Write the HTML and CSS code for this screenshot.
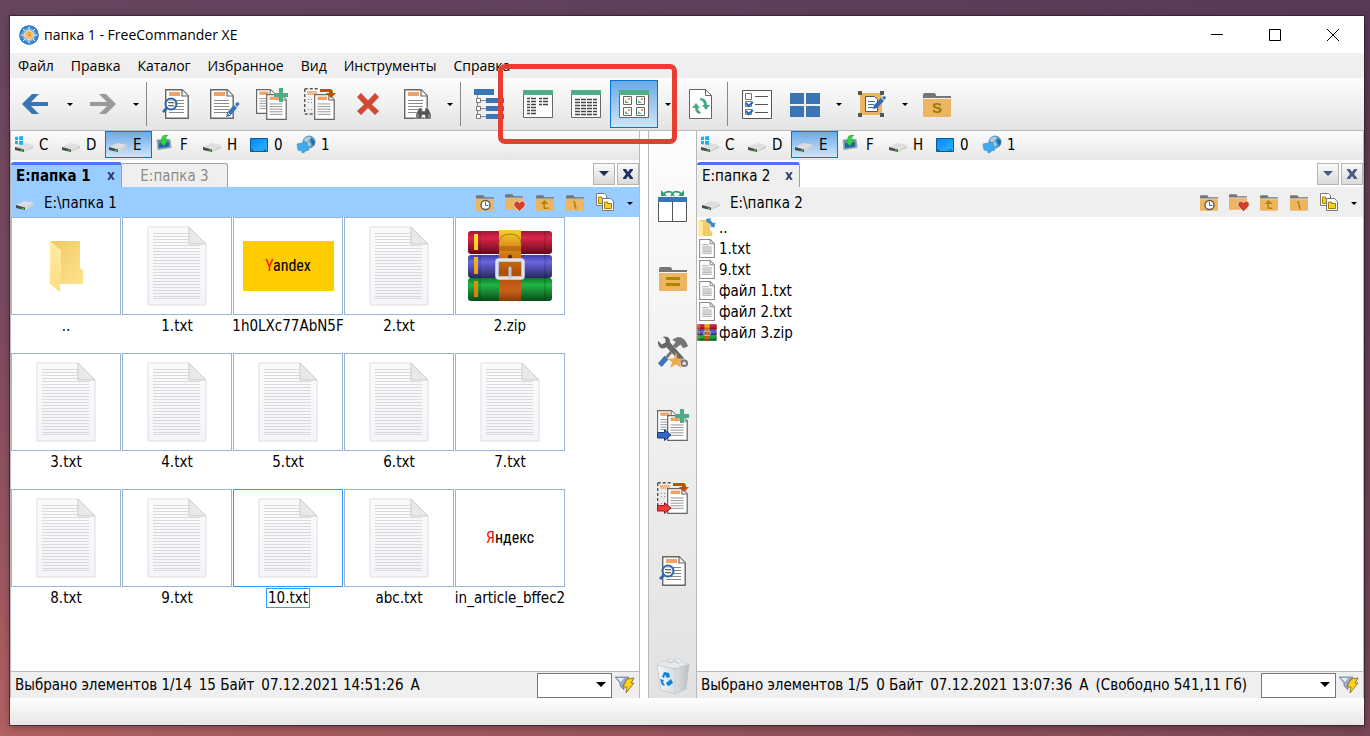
FILE: index.html
```html
<!DOCTYPE html>
<html lang="ru">
<head>
<meta charset="utf-8">
<title>папка 1 - FreeCommander XE</title>
<link rel="stylesheet" href="styles.css">
</head>
<body>
<svg class="defs" aria-hidden="true">
  <defs>
    <linearGradient id="g-disk" x1="0" y1="0" x2="1" y2="1"><stop offset="0" stop-color="#f0f0f0"/><stop offset="1" stop-color="#b4b4b4"/></linearGradient>
    <linearGradient id="g-page" x1="0" y1="0" x2="0" y2="1"><stop offset="0" stop-color="#fbfbfb"/><stop offset="1" stop-color="#f3f5f8"/></linearGradient>
    <linearGradient id="g-fold" x1="0" y1="0" x2="1" y2="1"><stop offset="0" stop-color="#efc95f"/><stop offset="1" stop-color="#ffe391"/></linearGradient>
    <linearGradient id="g-flap" x1="0" y1="0" x2="0" y2="1"><stop offset="0" stop-color="#ffeba8"/><stop offset="1" stop-color="#ffdc80"/></linearGradient>
    <linearGradient id="g-red" x1="0" y1="0" x2="0" y2="1"><stop offset="0" stop-color="#a31635"/><stop offset=".3" stop-color="#d92648"/><stop offset="1" stop-color="#650818"/></linearGradient>
    <linearGradient id="g-blue" x1="0" y1="0" x2="0" y2="1"><stop offset="0" stop-color="#3e3ea2"/><stop offset=".3" stop-color="#6866e0"/><stop offset="1" stop-color="#28285f"/></linearGradient>
    <linearGradient id="g-green" x1="0" y1="0" x2="0" y2="1"><stop offset="0" stop-color="#0d7c2b"/><stop offset=".3" stop-color="#22b644"/><stop offset="1" stop-color="#064b17"/></linearGradient>
    <linearGradient id="g-strap" x1="0" y1="0" x2="0" y2="1"><stop offset="0" stop-color="#f5d22a"/><stop offset=".25" stop-color="#d98a1c"/><stop offset=".6" stop-color="#b04f08"/><stop offset=".85" stop-color="#c8601a"/><stop offset="1" stop-color="#8a3d08"/></linearGradient>
    <linearGradient id="g-gold" x1="0" y1="0" x2="0" y2="1"><stop offset="0" stop-color="#ffe02a"/><stop offset="1" stop-color="#d8780c"/></linearGradient>
    <linearGradient id="g-mon" x1="0" y1="0" x2="1" y2="1"><stop offset="0" stop-color="#0088f0"/><stop offset="1" stop-color="#35b4ff"/></linearGradient>
    <radialGradient id="g-ball"><stop offset="0" stop-color="#e8f3fc"/><stop offset=".55" stop-color="#7fb8ea"/><stop offset="1" stop-color="#1463b8"/></radialGradient>
    <linearGradient id="g-bin" x1="0" y1="0" x2="1" y2="0"><stop offset="0" stop-color="#f4f6f8"/><stop offset=".6" stop-color="#d9dde0"/><stop offset="1" stop-color="#b9bfc4"/></linearGradient>
  </defs>

  <symbol id="i-app" viewBox="0 0 20 20"><circle cx="10" cy="10" r="9.700" fill="url(#g-ball)"/><circle cx="10" cy="10" r="8.800" fill="none" stroke="#2b7fd0" stroke-width="1.600"/><path d="M10 1.500v3M10 15.500v3M1.500 10h3M15.500 10h3M4 4l2 2M14 14l2 2M4 16l2-2M14 6l2-2" stroke="#e6f2fc"/><circle cx="10" cy="10" r="4.500" fill="#f9b860" stroke="#f3dcb4"/><path d="M10 7v3.500h2" stroke="#d08c2c" fill="none"/></symbol>
  <symbol id="i-arrow" viewBox="0 0 32 32"><path d="M2 16 12 6h7l-8 8h17v4H11l8 8h-7z"/></symbol>
  <symbol id="i-page" viewBox="0 0 24 30"><path d="M.7.700h16.500l6 6v22.500H.7z" fill="#fff" stroke="#666" stroke-width="1.400"/><path d="M17 1v6h6" fill="#f5f5f5" stroke="#666" stroke-width="1.200"/><path d="M4 3h11v4H4z" fill="#f0a264"/><path d="M4 11.500h15M4 14.500h15M4 17.500h15M4 20.500h15M4 23.500h15" stroke="#888"/></symbol>
  <symbol id="i-dash" viewBox="0 0 24 30"><path d="M.7.700h15M.7 1v25H11" fill="none" stroke="#555" stroke-width="1.400" stroke-dasharray="3 2"/><path d="M3 3h10v4H3z" fill="#f0a264"/><path d="M4 4h9M3 6h9" stroke="#fff" stroke-dasharray="1 1"/><path d="M4 11.500h6M4 14.500h6M4 21.500h4" stroke="#888" stroke-dasharray="1 2"/></symbol>
  <symbol id="i-view" viewBox="0 0 32 32"><use href="#i-page" x="5" y="1" width="24" height="30"/><circle cx="11" cy="16" r="5.500" fill="#fff" fill-opacity=".6" stroke="#2c67ac" stroke-width="2"/><path d="M8 14.500h6M8 17.500h6" stroke="#666"/><path d="m7 20-4 4" stroke="#2c67ac" stroke-width="2.600"/></symbol>
  <symbol id="i-edit" viewBox="0 0 32 32"><use href="#i-page" x="2" y="1" width="24" height="30"/><path d="m18 29 1.500-5L26 17l3 3-7 8z" fill="#3a74b5"/><path d="m27 16 3-2 1.500 2-2.500 3z" fill="#3a74b5"/><path d="m20 25 2 2" stroke="#fff"/></symbol>
  <symbol id="i-plus" viewBox="0 0 14 14"><path d="M5 0h4v5h5v4H9v5H5V9H0V5h5z" fill="#4bad85"/></symbol>
  <symbol id="i-copy" viewBox="0 0 32 32"><use href="#i-page" x="0" y="1" width="20" height="25"/><use href="#i-page" x="10" y="6" width="21" height="26"/><use href="#i-plus" x="18" y="0" width="14" height="14"/></symbol>
  <symbol id="i-move" viewBox="0 0 32 32"><use href="#i-dash" x="0" y="0" width="24" height="30"/><use href="#i-page" x="10" y="6" width="21" height="26"/><path d="M16 1h10q3 0 3 4h3l-5 5-5-5h3V4h-9z" fill="#c94a04"/></symbol>
  <symbol id="i-delete" viewBox="0 0 32 32"><path d="m5 9 4-4 7 7.500L23 5l4 4-7 7.500 7 6.500-4 4-7-7-7 7-4-4 7-6.500z" fill="#d24a34"/></symbol>
  <symbol id="i-find" viewBox="0 0 32 32"><use href="#i-page" x="4" y="1" width="24" height="30"/><path d="M16 31v-5l3-6h3v3h3v-3h3l3 6v5h-6v-4h-3v4z" fill="#555" stroke="#eee" stroke-width=".5"/><path d="M18 26v4M29 26v4" stroke="#ccc" stroke-width=".7"/></symbol>
  <symbol id="i-tree" viewBox="0 0 32 32"><path d="M3.500 7v21M3 12.500h9M3 20.500h9M3 28.500h9" stroke="#888" fill="none"/><path d="M0 1h20v6H0zM12 10h18v5H12zM12 18h18v5H12zM12 26h18v5H12z" fill="#3a75b4"/><path d="M2.500 10.500h4v4h-4zM2.500 18.500h4v4h-4zM2.500 26.500h4v4h-4z" fill="#fff" stroke="#777"/></symbol>
  <symbol id="i-frame" viewBox="0 0 32 32"><path d="M1.500 3.500h29v26h-29z" fill="#fff" stroke="#666"/><path d="M1 2h30v5H1z" fill="#4fae85"/></symbol>
  <symbol id="i-list" viewBox="0 0 32 32"><use href="#i-frame"/><path d="M5 10.500h10M5 13.500h10M5 16.500h10M5 19.500h10M5 22.500h10M5 25.500h10M17 10.500h10M17 13.500h10M17 16.500h10" stroke="#444" stroke-width="1.300" stroke-dasharray="3 1 5 1"/></symbol>
  <symbol id="i-details" viewBox="0 0 32 32"><use href="#i-frame"/><path d="M5 11.500h22M5 14.500h22M5 17.500h22M5 20.500h22M5 23.500h22M5 26.500h22" stroke="#444" stroke-width="1.300" stroke-dasharray="5 1"/></symbol>
  <symbol id="i-pic" viewBox="0 0 9 9"><path d="M.5.500h8v8h-8z" fill="#fff" stroke="#666"/><path d="M5 2h2v2H5z" fill="#eba04e"/><path d="M2 7V4l4 3z" fill="#5fb594"/></symbol>
  <symbol id="i-thumbs" viewBox="0 0 32 32"><use href="#i-frame"/><use href="#i-pic" x="5" y="8" width="9" height="9"/><use href="#i-pic" x="18" y="8" width="9" height="9"/><use href="#i-pic" x="5" y="19" width="9" height="9"/><use href="#i-pic" x="18" y="19" width="9" height="9"/></symbol>
  <symbol id="i-refresh" viewBox="0 0 32 32"><path d="M4.500 1.500h16l6 6v23h-22z" fill="#fff" stroke="#666"/><path d="M20.500 1.500v6h6" fill="none" stroke="#666"/><path d="M15 26q-5-1-5-6H7l4-5 4 5h-2q0 3 3 4zM15 10q7 0 7 7h3l-4 5-4-5h2q0-4-4-5z" fill="#49aa80"/></symbol>
  <symbol id="i-check" viewBox="0 0 32 32"><path d="M1.500 2.500h29v28h-29z" fill="#fff" stroke="#555"/><path d="M14 8.500h13M14 16.500h13M14 24.500h13" stroke="#555"/><path d="M4.500 5.500h6v6h-6zM4.500 13.500h6v5h-6zM4.500 21.500h6v5h-6z" fill="#fff" stroke="#777"/><path d="m5 15 2.500 3 4.500-4M5 23l2.500 3 4.500-4" fill="none" stroke="#2c67ac" stroke-width="2"/></symbol>
  <symbol id="i-tiles" viewBox="0 0 32 32"><path d="M1 5h14v11H1zM17 5h14v11H17zM1 18h14v11H1zM17 18h14v11H17z" fill="#3a75b4"/></symbol>
  <symbol id="i-select" viewBox="0 0 32 32"><path d="M5 5h22v22H5z" fill="#ebb561"/><path d="M3 3h4v4H3zM25 3h4v4h-4zM3 25h4v4H3zM25 25h4v4h-4z" fill="#555"/><path d="M10.500 8.500h9l3 3v12h-12z" fill="#fff" stroke="#555"/><path d="M13 13.500h7M13 16.500h6M13 19.500h6" stroke="#3a75b4"/><path d="m18 21 1-4 7-7 3 3-7 7zM27 9l3-1 1 2-2 2z" fill="#2f6cb3"/></symbol>
  <symbol id="i-folder" viewBox="0 0 28 24"><path d="M0 5V2q0-2 2-2h9q2 0 2 3h15v2z" fill="#757575"/><path d="M0 6h28v17q0 1-1 1H1q-1 0-1-1z" fill="#ebb561"/></symbol>
  <symbol id="i-eq" viewBox="0 0 32 32"><use href="#i-folder" x="2" y="4" width="28" height="24"/><path d="M9 14h14v3H9zM9 20h14v3H9z" fill="#b08500"/></symbol>
  <symbol id="i-swap" viewBox="0 0 32 32"><path d="M1.500 7.500h28v24h-28zM15.500 8v24" fill="#fff" stroke="#555"/><path d="M1 7h29v5H1z" fill="#3a75b4"/><path d="M6 4.500q3.500-4 8-2.500l3 4M25 4.500q-3.500-4-8-2.500l-3 4" fill="none" stroke="#32a170" stroke-width="1.700"/><path d="M4 0v6h6zM27 0v6h-6z" fill="#32a170"/></symbol>
  <symbol id="i-tools" viewBox="0 0 34 34"><path d="M1 5l4 4 4-2V3L6 1q8-2 8 6l15 17-4 4L10 12Q3 16 1 8z" fill="#686868"/><path d="m16 4 6-3q8 0 11 10l-5 2-3-4-5 4-3-3 3-4z" fill="#757575"/><path d="m15 17-5 6" stroke="#777" stroke-width="3"/><path d="m1 29 7-8 4 4-7 8z" fill="#3a75b4"/><circle cx="29" cy="29" r="3" fill="#ddd" stroke="#777" stroke-width="2"/><path d="m20 17 2 7h7l-5 4 2 6-6-4-6 4 2-6-5-4h7z" fill="#ebac4f"/></symbol>
  <symbol id="i-garrow" viewBox="0 0 15 12"><path d="M.5 3.500h7V.700L14 6l-6.500 5.500V9h-7z"/></symbol>
  <symbol id="i-copyto" viewBox="0 0 32 32"><use href="#i-copy"/><use href="#i-garrow" y="20" width="15" height="12" fill="#3569c8" stroke="#173c7c"/></symbol>
  <symbol id="i-moveto" viewBox="0 0 32 32"><use href="#i-move"/><use href="#i-garrow" y="20" width="15" height="12" fill="#ee3b3b" stroke="#9f1717"/></symbol>
  <symbol id="i-bin" viewBox="0 0 34 38"><path d="m2 8 3-4 5 1 3-4 5 2 5-2 3 4 6 2-2 5H5z" fill="#e6e9eb" stroke="#c2c8cc" stroke-width=".6"/><path d="m11 3 3 3 5-2 4 3" fill="none" stroke="#b5bfc6"/><path d="m1 8 18 4 14-5-3 25-11 5-14-4z" fill="url(#g-bin)" stroke="#bcc2c7" stroke-width=".7"/><path d="M19 12v25" stroke="#c8cdd1"/><path d="m6 20 2-5 5 1 1 4-3 1-2-3-1 3zM4 22l4 1-1 2 2 4-3-1zM10 26l5-4 2 4-4 3-2-1z" fill="#0e83dc"/></symbol>

  <symbol id="i-disk" viewBox="0 0 20 20"><path d="m1 12 9-4 9 2-9 4z" fill="#dedede"/><path d="m1 12 9 2.500V17L1 15z" fill="#4a4a4a"/><path d="m10 14.500 9-4V13l-9 4z" fill="url(#g-disk)"/><path d="m7 14.500 2 .5v1.500L7 16z" fill="#2bd03c"/></symbol>
  <symbol id="i-windisk" viewBox="0 0 20 20"><use href="#i-disk"/><path d="M1 2l3-.5V5H1zM5 1.500 9 1v4H5zM1 6h3v3.500L1 9zM5 6h4v4l-4-.5z" fill="#18b4f0"/></symbol>
  <symbol id="i-netdisk" viewBox="0 0 20 20"><path d="m2 5 13-.5 1 8-13 2z" fill="#6a98b8" stroke="#9aa5ad"/><path d="m4 8 10-1v4.500L4 13z" fill="#2762a8"/><path d="M8 1q3-2 5-1-3 1-2 5h2l-4 6-5-5h3Q6 3 8 1z" fill="#31d442" stroke="#14972a" stroke-width=".5"/></symbol>
  <symbol id="i-monitor" viewBox="0 0 20 20"><path d="M1.500 3.500h17v13h-17z" fill="url(#g-mon)" stroke="#0b5a98"/><path d="M2 15h16" stroke="#09477d" stroke-dasharray="2 9 1 1"/></symbol>
  <symbol id="i-globe" viewBox="0 0 20 20"><circle cx="13" cy="7" r="6.500" fill="#5a9dc8"/><path d="M8 4q4-4 7-1l-3 3 3 3-2 3q-4-3-5-8z" fill="#b0cfdf"/><path d="m15 3 4 3-1 5q-4-3-3-8z" fill="#236da8"/><path d="m1 9 10-2 2 8-4 1v1l-3 1v-2l-4-1z" fill="#3daaf2" stroke="#4a8fc4" stroke-width=".7"/></symbol>
  <symbol id="i-fclock" viewBox="0 0 22 20"><use href="#i-folder" x="1" y="2" width="18" height="16"/><circle cx="10.500" cy="12" r="4.500" fill="#fff" stroke="#555" stroke-width="1.300"/><path d="M10.500 9v3.500h3" fill="none" stroke="#256bb4"/></symbol>
  <symbol id="i-fheart" viewBox="0 0 22 20"><use href="#i-folder" x="0" y="1" width="18" height="16"/><path d="M14.500 18.500 9 13q-1-4 3-5 2 0 2.500 2 .5-2 3-2 3.500 1 2.500 5z" fill="#d1402b" stroke="#eee" stroke-width=".7"/></symbol>
  <symbol id="i-fup" viewBox="0 0 22 20"><use href="#i-folder" x="1" y="2" width="18" height="16"/><path d="m9.500 7-4 4h3v5h5v-1.500H10V11h3.500z" fill="#b08500"/></symbol>
  <symbol id="i-froot" viewBox="0 0 22 20"><use href="#i-folder" x="1" y="2" width="18" height="16"/><path d="m9 8 2 8" stroke="#b08500" stroke-width="1.500"/></symbol>
  <symbol id="i-fcopy" viewBox="0 0 22 20"><path d="M1.500.500h8l2 2v10h-10z" fill="#fff" stroke="#777"/><path d="M3.500 5.500V4h3v1.500h3v5h-6z" fill="#f5cf24" stroke="#a97c00"/><path d="M7.500 5.500h8l3 3v9h-11z" fill="#fff" stroke="#777"/><path d="M9.500 10.500V9h3v1.500h4v5h-7z" fill="#f5cf24" stroke="#a97c00"/></symbol>
  <symbol id="i-filter" viewBox="0 0 20 18"><path d="M0 1h14l-5 6v7l-4-4V7z" fill="#9aacc6" stroke="#667b9a" stroke-width=".7"/><path d="M2 2h7L6 6z" fill="#e8eef6"/><path d="m12 3 7-1-3 5h3l-8 10 1-6H8z" fill="#ffd21d" stroke="#94690a" stroke-width=".9"/></symbol>

  <symbol id="i-down" viewBox="0 0 10 10"><path d="M2 4h6L5 7z"/></symbol>
  <symbol id="i-bigdown" viewBox="0 0 14 14"><path d="M2 4h10L7 9z"/></symbol>
  <symbol id="i-x" viewBox="0 0 14 14"><path d="M2 2h3l2 3 2-3h3v1L9 7l3 4v1H9L7 9l-2 3H2v-1l3-4-3-4z"/></symbol>
  <symbol id="i-tx" viewBox="1 1 8 8"><path d="M2 2h2l1 2 1-2h2L6 5l2 3H6L5 6 4 8H2l2-3z"/></symbol>

  <symbol id="t-txt" viewBox="0 0 60 80"><path d="M1 1h41l17 17v61H1z" fill="url(#g-page)" stroke="#dcdfe2"/><path d="M6 7.500h36M6 10.500h36M6 13.500h36M6 16.500h36M6 19.500h47M6 22.500h47M6 25.500h47M6 28.500h47M6 31.500h47M6 34.500h47M6 37.500h47M6 40.500h47M6 43.500h47M6 46.500h47M6 49.500h47M6 52.500h47M6 55.500h47M6 58.500h47M6 61.500h47M6 64.500h47M6 67.500h47M6 70.500h47M6 72.500h47" stroke="#d7d9dc"/><path d="M42 1v17h17z" fill="#e9e9ea" stroke="#c9cbcd"/></symbol>
  <symbol id="t-folder" viewBox="0 0 34 52"><path d="M1 1h30v27l3 2v14H1z" fill="url(#g-fold)"/><path d="m1 1 11 9v27l-1 1v14L1 44z" fill="url(#g-flap)"/></symbol>
  <symbol id="t-zip" viewBox="0 0 86 74">
    <rect x="1" y="2" width="84" height="23" rx="3" fill="url(#g-red)"/><rect x="1" y="26" width="84" height="23" rx="3" fill="url(#g-blue)"/><rect x="1" y="49" width="84" height="23" rx="3" fill="url(#g-green)"/>
    <path d="M7 5h4v16H7zM7 28h4v17H7zM7 52h4v16H7z" fill="url(#g-gold)"/><path d="M13 3v68M78 3v68" stroke="#000" stroke-opacity=".25"/>
    <path d="M32 1h22v71H32z" fill="url(#g-strap)"/><path d="M32 15q0-10 11-10t11 10" fill="none" stroke="#b07a14"/><path d="M32 17h22v5H32z" fill="#a85208" fill-opacity=".5"/><circle cx="43" cy="28" r="2.200" fill="#5e2a06"/>
    <rect x="30" y="31" width="26" height="18" rx="2" fill="none" stroke="#dbe4ee" stroke-width="3.500"/><path d="M43 39v9" stroke="#b9c6d4" stroke-width="3" stroke-linecap="round"/>
  </symbol>
  <symbol id="s-txt" viewBox="0 0 15 18"><path d="M.5.500h10l4 4v13H.5z" fill="#fdfdfd" stroke="#8b8b8b"/><path d="M10.500.500v4h4" fill="none" stroke="#8b8b8b"/><path d="M3 5.500h6M3 7.500h9M3 9.500h9M3 11.500h9M3 13.500h9" stroke="#a5a5a5"/></symbol>
  <symbol id="s-up" viewBox="0 0 18 18"><path d="M1 2h11v10l2 1v4H1z" fill="#f1cd6a"/><path d="m1 2 4 2v14l-4-2z" fill="#ffe9a3"/><path d="m8 1 5-1-1 2 3 3 2-1-1 5-4-1 1-1-3-3-1 1z" fill="#3b8ad0"/></symbol>
</svg>

<div class="window">
  <header class="titlebar">
    <svg class="appicon"><use href="#i-app"/></svg>
    <h1>папка 1 - FreeCommander XE</h1>
    <div class="winbtns">
      <button aria-label="Свернуть"><svg viewBox="0 0 12 12"><path d="M0 5.500h12"/></svg></button>
      <button aria-label="Развернуть"><svg viewBox="0 0 12 12"><path d="M.5.500h11v11H.5z"/></svg></button>
      <button aria-label="Закрыть"><svg viewBox="0 0 12 12"><path d="m0 0 12 12M12 0 0 12"/></svg></button>
    </div>
  </header>

  <nav class="menu">
    <button>Файл</button><button>Правка</button><button>Каталог</button><button>Избранное</button><button>Вид</button><button>Инструменты</button><button>Справка</button>
  </nav>

  <div class="toolbar" role="toolbar">
    <button class="tool back" aria-label="Назад"><svg><use href="#i-arrow"/></svg></button>
    <button class="drop" aria-label="История назад"><svg><use href="#i-down"/></svg></button>
    <button class="tool forward" aria-label="Вперёд"><svg><use href="#i-arrow"/></svg></button>
    <button class="drop" aria-label="История вперёд"><svg><use href="#i-down"/></svg></button>
    <span class="sep"></span>
    <button class="tool" aria-label="Просмотр"><svg><use href="#i-view"/></svg></button>
    <button class="tool" aria-label="Правка файла"><svg><use href="#i-edit"/></svg></button>
    <button class="tool" aria-label="Копировать"><svg><use href="#i-copy"/></svg></button>
    <button class="tool" aria-label="Переместить"><svg><use href="#i-move"/></svg></button>
    <button class="tool" aria-label="Удалить"><svg><use href="#i-delete"/></svg></button>
    <button class="tool" aria-label="Поиск"><svg><use href="#i-find"/></svg></button>
    <button class="drop" aria-label="Варианты поиска"><svg><use href="#i-down"/></svg></button>
    <span class="sep"></span>
    <button class="tool" aria-label="Дерево"><svg><use href="#i-tree"/></svg></button>
    <div class="views">
      <button class="tool" aria-label="Список"><svg><use href="#i-list"/></svg></button>
      <button class="tool" aria-label="Таблица"><svg><use href="#i-details"/></svg></button>
      <button class="tool active" aria-label="Эскизы"><svg><use href="#i-thumbs"/></svg></button>
      <button class="drop" aria-label="Размер эскизов"><svg><use href="#i-down"/></svg></button>
      <span class="marker"></span>
    </div>
    <button class="tool" aria-label="Обновить"><svg><use href="#i-refresh"/></svg></button>
    <span class="sep"></span>
    <button class="tool" aria-label="Настройки"><svg><use href="#i-check"/></svg></button>
    <button class="tool" aria-label="Разделение"><svg><use href="#i-tiles"/></svg></button>
    <button class="drop" aria-label="Варианты разделения"><svg><use href="#i-down"/></svg></button>
    <button class="tool" aria-label="Выделение"><svg><use href="#i-select"/></svg></button>
    <button class="drop" aria-label="Варианты выделения"><svg><use href="#i-down"/></svg></button>
    <button class="tool" aria-label="Папка"><svg viewBox="0 0 32 32"><use href="#i-folder" x="2" y="5" width="28" height="24"/><text x="16" y="25" text-anchor="middle" class="glyph">S</text></svg></button>
  </div>

  <main class="panes">
    <section class="pane left">
      <div class="drives">
        <button><svg><use href="#i-windisk"/></svg>C</button><button><svg><use href="#i-disk"/></svg>D</button><button class="active"><svg><use href="#i-disk"/></svg>E</button><button><svg><use href="#i-netdisk"/></svg>F</button><button><svg><use href="#i-disk"/></svg>H</button><button><svg><use href="#i-monitor"/></svg>0</button><button><svg><use href="#i-globe"/></svg>1</button>
      </div>
      <div class="tabs">
        <button class="tab current">E:папка 1<svg><use href="#i-tx"/></svg></button>
        <button class="tab idle">E:папка 3</button>
        <span class="grow"></span>
        <button class="tabbtn" aria-label="Список вкладок"><svg><use href="#i-bigdown"/></svg></button>
        <button class="tabbtn" aria-label="Закрыть вкладку"><svg><use href="#i-x"/></svg></button>
      </div>
      <div class="path">
        <svg class="disk"><use href="#i-disk"/></svg><span class="grow">E:\папка 1</span>
        <button aria-label="История"><svg><use href="#i-fclock"/></svg></button><button aria-label="Избранные папки"><svg><use href="#i-fheart"/></svg></button><button aria-label="Вверх"><svg><use href="#i-fup"/></svg></button><button aria-label="Корень"><svg><use href="#i-froot"/></svg></button><button aria-label="Копировать путь"><svg><use href="#i-fcopy"/></svg></button><button class="more" aria-label="Ещё"><svg class="tri"><use href="#i-down"/></svg></button>
      </div>
      <div class="thumbs">
        <figure><div><svg class="fold"><use href="#t-folder"/></svg></div><figcaption>..</figcaption></figure>
        <figure><div><svg class="txt"><use href="#t-txt"/></svg></div><figcaption>1.txt</figcaption></figure>
        <figure><div><span class="logo yellow"><b>Y</b>andex</span></div><figcaption>1h0LXc77AbN5F</figcaption></figure>
        <figure><div><svg class="txt"><use href="#t-txt"/></svg></div><figcaption>2.txt</figcaption></figure>
        <figure><div><svg class="zip"><use href="#t-zip"/></svg></div><figcaption>2.zip</figcaption></figure>
        <figure><div><svg class="txt"><use href="#t-txt"/></svg></div><figcaption>3.txt</figcaption></figure>
        <figure><div><svg class="txt"><use href="#t-txt"/></svg></div><figcaption>4.txt</figcaption></figure>
        <figure><div><svg class="txt"><use href="#t-txt"/></svg></div><figcaption>5.txt</figcaption></figure>
        <figure><div><svg class="txt"><use href="#t-txt"/></svg></div><figcaption>6.txt</figcaption></figure>
        <figure><div><svg class="txt"><use href="#t-txt"/></svg></div><figcaption>7.txt</figcaption></figure>
        <figure><div><svg class="txt"><use href="#t-txt"/></svg></div><figcaption>8.txt</figcaption></figure>
        <figure><div><svg class="txt"><use href="#t-txt"/></svg></div><figcaption>9.txt</figcaption></figure>
        <figure class="focus"><div><svg class="txt"><use href="#t-txt"/></svg></div><figcaption>10.txt</figcaption></figure>
        <figure><div><svg class="txt"><use href="#t-txt"/></svg></div><figcaption>abc.txt</figcaption></figure>
        <figure><div><span class="logo"><b>Я</b>ндекс</span></div><figcaption>in_article_bffec2</figcaption></figure>
      </div>
      <div class="status">
        <span>Выбрано элементов 1/14</span><span>15 Байт</span><span>07.12.2021 14:51:26</span><span>A</span>
        <label class="combo"><select aria-label="Фильтр"><option></option></select><svg><use href="#i-bigdown"/></svg></label>
        <button aria-label="Применить фильтр"><svg><use href="#i-filter"/></svg></button>
      </div>
    </section>

    <aside class="middle">
      <button aria-label="Поменять панели"><svg><use href="#i-swap"/></svg></button>
      <button aria-label="Выровнять панели"><svg><use href="#i-eq"/></svg></button>
      <button aria-label="Инструменты"><svg><use href="#i-tools"/></svg></button>
      <button aria-label="Копировать в"><svg><use href="#i-copyto"/></svg></button>
      <button aria-label="Переместить в"><svg><use href="#i-moveto"/></svg></button>
      <button aria-label="Просмотр"><svg><use href="#i-view"/></svg></button>
      <button class="bin" aria-label="Корзина"><svg><use href="#i-bin"/></svg></button>
    </aside>

    <section class="pane right">
      <div class="drives">
        <button><svg><use href="#i-windisk"/></svg>C</button><button><svg><use href="#i-disk"/></svg>D</button><button class="active"><svg><use href="#i-disk"/></svg>E</button><button><svg><use href="#i-netdisk"/></svg>F</button><button><svg><use href="#i-disk"/></svg>H</button><button><svg><use href="#i-monitor"/></svg>0</button><button><svg><use href="#i-globe"/></svg>1</button>
      </div>
      <div class="tabs">
        <button class="tab current">E:папка 2<svg><use href="#i-tx"/></svg></button>
        <span class="grow"></span>
        <button class="tabbtn" aria-label="Список вкладок"><svg><use href="#i-bigdown"/></svg></button>
        <button class="tabbtn" aria-label="Закрыть вкладку"><svg><use href="#i-x"/></svg></button>
      </div>
      <div class="path">
        <svg class="disk"><use href="#i-disk"/></svg><span class="grow">E:\папка 2</span>
        <button aria-label="История"><svg><use href="#i-fclock"/></svg></button><button aria-label="Избранные папки"><svg><use href="#i-fheart"/></svg></button><button aria-label="Вверх"><svg><use href="#i-fup"/></svg></button><button aria-label="Корень"><svg><use href="#i-froot"/></svg></button><button aria-label="Копировать путь"><svg><use href="#i-fcopy"/></svg></button><button class="more" aria-label="Ещё"><svg class="tri"><use href="#i-down"/></svg></button>
      </div>
      <ul class="files">
        <li><svg><use href="#s-up"/></svg>..</li>
        <li><svg><use href="#s-txt"/></svg>1.txt</li>
        <li><svg><use href="#s-txt"/></svg>9.txt</li>
        <li><svg><use href="#s-txt"/></svg>файл 1.txt</li>
        <li><svg><use href="#s-txt"/></svg>файл 2.txt</li>
        <li><svg><use href="#t-zip"/></svg>файл 3.zip</li>
      </ul>
      <div class="status">
        <span>Выбрано элементов 1/5</span><span>0 Байт</span><span>07.12.2021 13:07:36</span><span>A</span><span>(Свободно 541,11 Гб)</span>
        <label class="combo"><select aria-label="Фильтр"><option></option></select><svg><use href="#i-bigdown"/></svg></label>
        <button aria-label="Применить фильтр"><svg><use href="#i-filter"/></svg></button>
      </div>
    </section>
  </main>
  <footer class="bottom"></footer>
</div>
</body>
</html>
```
FILE: styles.css
```css
* { box-sizing: border-box; }
body {
  margin: 0;
  min-height: 100vh;
  padding: 16px 6px 11px 10px;
  display: flex;
  background:
    linear-gradient(90deg, transparent 0, rgba(75, 48, 75, .55) 100%),
    linear-gradient(180deg, #66455f 0, #7d4a60 45%, #b36161 100%);
  font: 15px/20px "DejaVu Sans Condensed", "DejaVu Sans", "Noto Sans", sans-serif;
  color: #000;
}
.defs { position: absolute; width: 0; height: 0; }
svg { display: block; flex: none; }
button { border: 0; padding: 0; margin: 0; background: none; font: inherit; color: inherit; }
.grow { flex: 1; }
.glyph { font: bold 15px "Liberation Sans", sans-serif; fill: #a07800; }

.window {
  flex: 1;
  min-width: 0;
  display: flex;
  flex-direction: column;
  background: #fff;
  box-shadow: 0 0 0 1px rgba(50, 30, 45, .7), 0 2px 8px rgba(0, 0, 0, .35);
}

.titlebar {
  height: 37px;
  padding: 0 2px 0 9px;
  display: flex;
  align-items: center;
}
.appicon { width: 20px; height: 20px; }
.titlebar h1 { flex: 1; margin: 0 0 0 5px; font: 14px/20px "Open Sans", "Noto Sans", sans-serif; }
.winbtns { display: flex; }
.winbtns button { width: 58px; height: 36px; display: grid; place-items: center; }
.winbtns svg { width: 12px; height: 12px; fill: none; stroke: #000; }

.menu {
  height: 25px;
  padding-left: 8px;
  display: flex;
  gap: 17px;
  background: #efefef;
  font: 14px/25px "Open Sans", "Noto Sans", sans-serif;
}

.toolbar {
  height: 53px;
  padding: 2px;
  display: flex;
  background: linear-gradient(#fdfdfd, #e4e4e4);
  border-bottom: 1px solid #b8b8b8;
}
.tool { width: 48px; height: 48px; display: grid; place-items: center; border: 1px solid transparent; }
.tool svg { width: 32px; height: 32px; }
.active { border: 1px solid #0078d7; background: linear-gradient(#6aaae6, #d0e5f9); }
.back { fill: #3a75b4; }
.forward { fill: #9a9a9a; }
.forward svg { transform: scaleX(-1); }
.drop { width: 18px; height: 48px; padding-left: 2px; display: grid; place-items: center; }
.drop svg, .tri { width: 10px; height: 10px; }
.sep { width: 1px; height: 44px; margin: 2px 5px 0 2px; background: #8a8a8a; }
.views { position: relative; display: flex; padding-right: 1px; }
.marker {
  position: absolute;
  inset: -16px 0 -16px -16px;
  border: 5px solid #e63e31;
  border-radius: 7px;
  pointer-events: none;
  z-index: 2;
}

.panes { flex: 1; display: grid; grid-template-columns: minmax(0, 630fr) 56px minmax(0, 668fr); }
.pane { display: flex; flex-direction: column; min-width: 0; border: 0 solid #b8b8b8; border-width: 0 1px; }

.drives {
  height: 29px;
  display: flex;
  align-items: flex-start;
  background: linear-gradient(#fcfcfc, #e6e6e6);
}
.drives button { width: 47px; height: 27px; padding: 1px 0 0 2px; display: flex; align-items: center; gap: 5px; border: 1px solid transparent; }
.drives .active { border-color: #0078d7; }
.drives svg { width: 20px; height: 20px; }

.tabs { height: 27px; padding-top: 2px; display: flex; align-items: flex-end; }
.tab { display: flex; align-items: center; height: 25px; white-space: nowrap; }
.tab svg { width: 10px; height: 10px; margin-left: auto; fill: #2a3a60; }
.current {
  width: 111px;
  padding: 0 5px;
  border: 1px solid #a0a0a0;
  border-width: 3px 1px 0 0;
  border-top-color: #4a74f5;
  border-radius: 3px 3px 0 0;
  background: #efefef;
}
.left .current { background: #9cf; font-weight: bold; }
.right .current { width: 103px; }
.idle {
  width: 106px;
  height: 24px;
  justify-content: center;
  color: #8c8c8c;
  background: #efefef;
  border: 1px solid #a0a0a0;
  border-width: 1px 1px 0 0;
  border-radius: 0 3px 0 0;
}
.tabbtn {
  width: 22px;
  height: 22px;
  margin: 0 0 2px 2px;
  display: grid;
  place-items: center;
  border: 1px solid #b4b4b4;
  background: linear-gradient(#fafafa, #dadada);
  fill: #1d2f5c;
}
.right .tabbtn { fill: #455a85; }
.tabbtn svg { width: 14px; height: 14px; }

.path { height: 30px; padding: 2px 0 0 4px; display: flex; align-items: center; background: #efefef; }
.left .path { background: #9cf; }
.path .disk { width: 20px; height: 20px; margin-right: 9px; }
.path button { width: 30px; display: flex; }
.path button svg { width: 22px; height: 20px; }
.path .more { width: 14px; }
.path button .tri { width: 10px; height: 10px; }

.thumbs {
  flex: 1;
  display: grid;
  grid-template-columns: repeat(auto-fill, 110px);
  grid-auto-rows: 136px;
  gap: 0 1px;
  padding-right: 40px;
}
figure { margin: 0; display: flex; flex-direction: column; align-items: center; }
figure div { width: 110px; height: 98px; display: grid; place-items: center; border: 1px solid #99b4d1; }
figcaption { margin-top: 1px; border: 1px solid transparent; padding: 0 1px; line-height: 18px; white-space: nowrap; }
.focus div, .focus figcaption { border-color: #3399ff; }
.txt { width: 60px; height: 80px; }
.fold { width: 34px; height: 52px; }
.zip { width: 86px; height: 74px; }
.logo { font: 16px/50px "Roboto Condensed", "Liberation Sans Narrow", "Open Sans Condensed Light", "Open Sans Condensed", sans-serif; text-align: center; }
.logo b { font-weight: normal; color: #f01010; }
.yellow { width: 91px; background: #fc0; }

.files { flex: 1; list-style: none; margin: 0; padding: 0; }
.files li { height: 21px; display: flex; align-items: center; }
.files svg { width: 20px; height: 19px; margin-right: 2px; }

.status {
  height: 27px;
  padding-left: 4px;
  display: flex;
  align-items: center;
  gap: 7px;
  background: #efefef;
  border-top: 1px solid #b8b8b8;
  white-space: nowrap;
}
.combo { position: relative; width: 75px; height: 25px; margin-left: auto; }
.combo select { width: 100%; height: 100%; appearance: none; border: 1px solid #777; border-radius: 0; background: #fff; }
.combo svg { position: absolute; right: 4px; top: 5px; width: 14px; height: 14px; pointer-events: none; }
.status button { margin: 0 4px 0 -4px; }
.status button svg { width: 20px; height: 18px; }

.middle {
  margin-left: 8px;
  padding: 56px 0 3px;
  display: flex;
  flex-direction: column;
  align-items: center;
  gap: 35px;
  border-left: 1px solid #b8b8b8;
  background: linear-gradient(#fdfdfd, #e2e2e2);
}
.middle button { width: 38px; height: 38px; display: grid; place-items: center; }
.middle svg { width: 32px; height: 32px; }
.middle .bin { margin-top: auto; }
.middle .bin svg { width: 34px; height: 38px; }

.bottom { height: 27px; background: linear-gradient(#fff, #e6e6e6); }
```
